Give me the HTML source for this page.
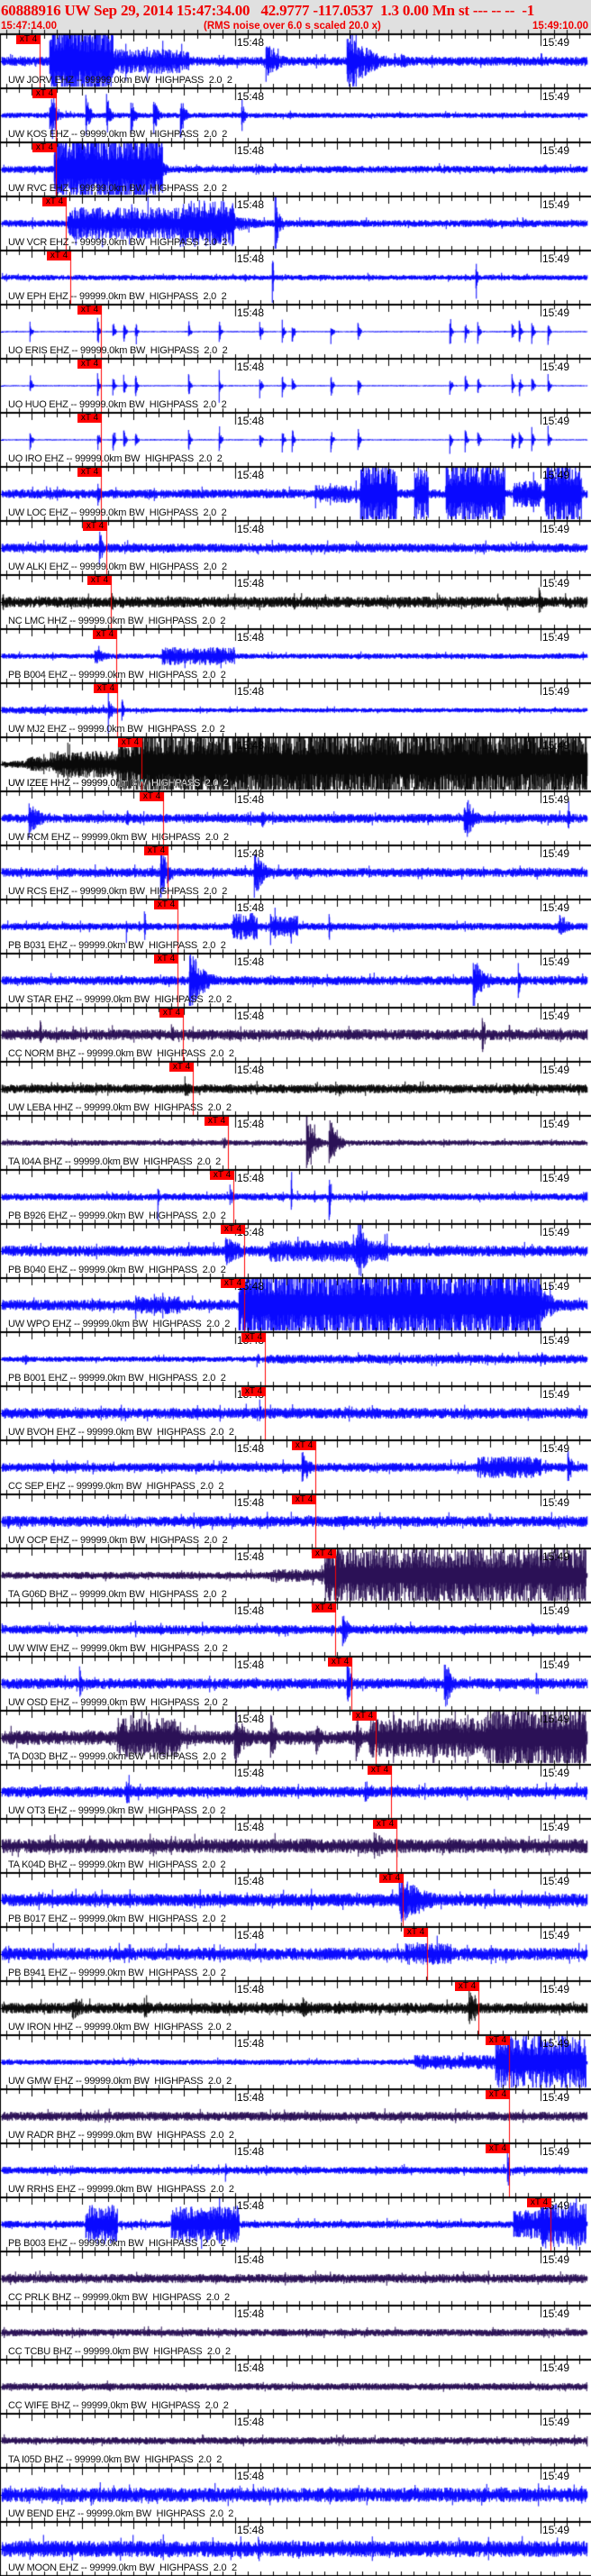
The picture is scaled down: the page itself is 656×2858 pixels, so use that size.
<!DOCTYPE html>
<html><head><meta charset="utf-8">
<style>
html,body{margin:0;padding:0;background:#fff;}
#w{position:relative;width:656px;height:2858px;overflow:hidden;background:#fff;}
#hd{position:absolute;left:0;top:0;width:656px;height:37px;background:#e0e0e0;}
#l1{position:absolute;left:1px;top:2px;font:bold 17px "Liberation Serif",serif;color:#f00000;white-space:pre;letter-spacing:-0.2px;}
.l2{position:absolute;top:23px;font:bold 11.5px "Liberation Sans",sans-serif;color:#f00000;white-space:pre;}
canvas{position:absolute;left:0;top:0;}
.lb{position:absolute;left:9px;font:11px "Liberation Sans",sans-serif;color:#111;white-space:pre;letter-spacing:-0.25px;line-height:12px;}
.t8,.t9{position:absolute;font:12px "Liberation Sans",sans-serif;color:#000;line-height:12px;}
.t8{left:263px}.t9{left:602px}
.bx{position:absolute;width:27px;height:10px;background:#ff0000;color:#000;font:10px "Liberation Sans",sans-serif;line-height:10px;text-align:center;}
</style></head><body><div id="w">
<div id="hd"></div>
<div id="l1">60888916 UW Sep 29, 2014 15:47:34.00   42.9777 -117.0537  1.3 0.00 Mn st --- -- --  -1</div>
<div class="l2" style="left:1px">15:47:14.00</div>
<div class="l2" style="left:226px">(RMS noise over 6.0 s scaled 20.0 x)</div>
<div class="l2" style="left:591px">15:49:10.00</div>
<canvas id="c" width="656" height="2858"></canvas>
<div id="ov">
<div class="lb" style="top:83px">UW JORV EHZ -- 99999.0km BW  HIGHPASS  2.0  2</div>
<div class="lb" style="top:143px">UW KOS EHZ -- 99999.0km BW  HIGHPASS  2.0  2</div>
<div class="lb" style="top:203px">UW RVC EHZ -- 99999.0km BW  HIGHPASS  2.0  2</div>
<div class="lb" style="top:263px">UW VCR EHZ -- 99999.0km BW  HIGHPASS  2.0  2</div>
<div class="lb" style="top:323px">UW EPH EHZ -- 99999.0km BW  HIGHPASS  2.0  2</div>
<div class="lb" style="top:383px">UO ERIS EHZ -- 99999.0km BW  HIGHPASS  2.0  2</div>
<div class="lb" style="top:443px">UO HUO EHZ -- 99999.0km BW  HIGHPASS  2.0  2</div>
<div class="lb" style="top:503px">UO IRO EHZ -- 99999.0km BW  HIGHPASS  2.0  2</div>
<div class="lb" style="top:563px">UW LOC EHZ -- 99999.0km BW  HIGHPASS  2.0  2</div>
<div class="lb" style="top:623px">UW ALKI EHZ -- 99999.0km BW  HIGHPASS  2.0  2</div>
<div class="lb" style="top:683px">NC LMC HHZ -- 99999.0km BW  HIGHPASS  2.0  2</div>
<div class="lb" style="top:743px">PB B004 EHZ -- 99999.0km BW  HIGHPASS  2.0  2</div>
<div class="lb" style="top:803px">UW MJ2 EHZ -- 99999.0km BW  HIGHPASS  2.0  2</div>
<div class="lb" style="top:863px;color:#fff;mix-blend-mode:difference">UW IZEE HHZ -- 99999.0km BW  HIGHPASS  2.0  2</div>
<div class="lb" style="top:923px">UW RCM EHZ -- 99999.0km BW  HIGHPASS  2.0  2</div>
<div class="lb" style="top:983px">UW RCS EHZ -- 99999.0km BW  HIGHPASS  2.0  2</div>
<div class="lb" style="top:1043px">PB B031 EHZ -- 99999.0km BW  HIGHPASS  2.0  2</div>
<div class="lb" style="top:1103px">UW STAR EHZ -- 99999.0km BW  HIGHPASS  2.0  2</div>
<div class="lb" style="top:1163px">CC NORM BHZ -- 99999.0km BW  HIGHPASS  2.0  2</div>
<div class="lb" style="top:1223px">UW LEBA HHZ -- 99999.0km BW  HIGHPASS  2.0  2</div>
<div class="lb" style="top:1283px">TA I04A BHZ -- 99999.0km BW  HIGHPASS  2.0  2</div>
<div class="lb" style="top:1343px">PB B926 EHZ -- 99999.0km BW  HIGHPASS  2.0  2</div>
<div class="lb" style="top:1403px">PB B040 EHZ -- 99999.0km BW  HIGHPASS  2.0  2</div>
<div class="lb" style="top:1463px">UW WPO EHZ -- 99999.0km BW  HIGHPASS  2.0  2</div>
<div class="lb" style="top:1523px">PB B001 EHZ -- 99999.0km BW  HIGHPASS  2.0  2</div>
<div class="lb" style="top:1583px">UW BVOH EHZ -- 99999.0km BW  HIGHPASS  2.0  2</div>
<div class="lb" style="top:1643px">CC SEP EHZ -- 99999.0km BW  HIGHPASS  2.0  2</div>
<div class="lb" style="top:1703px">UW OCP EHZ -- 99999.0km BW  HIGHPASS  2.0  2</div>
<div class="lb" style="top:1763px">TA G06D BHZ -- 99999.0km BW  HIGHPASS  2.0  2</div>
<div class="lb" style="top:1823px">UW WIW EHZ -- 99999.0km BW  HIGHPASS  2.0  2</div>
<div class="lb" style="top:1883px">UW OSD EHZ -- 99999.0km BW  HIGHPASS  2.0  2</div>
<div class="lb" style="top:1943px">TA D03D BHZ -- 99999.0km BW  HIGHPASS  2.0  2</div>
<div class="lb" style="top:2003px">UW OT3 EHZ -- 99999.0km BW  HIGHPASS  2.0  2</div>
<div class="lb" style="top:2063px">TA K04D BHZ -- 99999.0km BW  HIGHPASS  2.0  2</div>
<div class="lb" style="top:2123px">PB B017 EHZ -- 99999.0km BW  HIGHPASS  2.0  2</div>
<div class="lb" style="top:2183px">PB B941 EHZ -- 99999.0km BW  HIGHPASS  2.0  2</div>
<div class="lb" style="top:2243px">UW IRON HHZ -- 99999.0km BW  HIGHPASS  2.0  2</div>
<div class="lb" style="top:2303px">UW GMW EHZ -- 99999.0km BW  HIGHPASS  2.0  2</div>
<div class="lb" style="top:2363px">UW RADR BHZ -- 99999.0km BW  HIGHPASS  2.0  2</div>
<div class="lb" style="top:2423px">UW RRHS EHZ -- 99999.0km BW  HIGHPASS  2.0  2</div>
<div class="lb" style="top:2483px">PB B003 EHZ -- 99999.0km BW  HIGHPASS  2.0  2</div>
<div class="lb" style="top:2543px">CC PRLK BHZ -- 99999.0km BW  HIGHPASS  2.0  2</div>
<div class="lb" style="top:2603px">CC TCBU BHZ -- 99999.0km BW  HIGHPASS  2.0  2</div>
<div class="lb" style="top:2663px">CC WIFE BHZ -- 99999.0km BW  HIGHPASS  2.0  2</div>
<div class="lb" style="top:2723px">TA I05D BHZ -- 99999.0km BW  HIGHPASS  2.0  2</div>
<div class="lb" style="top:2783px">UW BEND EHZ -- 99999.0km BW  HIGHPASS  2.0  2</div>
<div class="lb" style="top:2843px">UW MOON EHZ -- 99999.0km BW  HIGHPASS  2.0  2</div>

<div class="t8" style="top:41px">15:48</div><div class="t9" style="top:41px">15:49</div>
<div class="t8" style="top:101px">15:48</div><div class="t9" style="top:101px">15:49</div>
<div class="t8" style="top:161px">15:48</div><div class="t9" style="top:161px">15:49</div>
<div class="t8" style="top:221px">15:48</div><div class="t9" style="top:221px">15:49</div>
<div class="t8" style="top:281px">15:48</div><div class="t9" style="top:281px">15:49</div>
<div class="t8" style="top:341px">15:48</div><div class="t9" style="top:341px">15:49</div>
<div class="t8" style="top:401px">15:48</div><div class="t9" style="top:401px">15:49</div>
<div class="t8" style="top:461px">15:48</div><div class="t9" style="top:461px">15:49</div>
<div class="t8" style="top:521px">15:48</div><div class="t9" style="top:521px">15:49</div>
<div class="t8" style="top:581px">15:48</div><div class="t9" style="top:581px">15:49</div>
<div class="t8" style="top:641px">15:48</div><div class="t9" style="top:641px">15:49</div>
<div class="t8" style="top:701px">15:48</div><div class="t9" style="top:701px">15:49</div>
<div class="t8" style="top:761px">15:48</div><div class="t9" style="top:761px">15:49</div>
<div class="t8" style="top:821px">15:48</div><div class="t9" style="top:821px">15:49</div>
<div class="t8" style="top:881px">15:48</div><div class="t9" style="top:881px">15:49</div>
<div class="t8" style="top:941px">15:48</div><div class="t9" style="top:941px">15:49</div>
<div class="t8" style="top:1001px">15:48</div><div class="t9" style="top:1001px">15:49</div>
<div class="t8" style="top:1061px">15:48</div><div class="t9" style="top:1061px">15:49</div>
<div class="t8" style="top:1121px">15:48</div><div class="t9" style="top:1121px">15:49</div>
<div class="t8" style="top:1181px">15:48</div><div class="t9" style="top:1181px">15:49</div>
<div class="t8" style="top:1241px">15:48</div><div class="t9" style="top:1241px">15:49</div>
<div class="t8" style="top:1301px">15:48</div><div class="t9" style="top:1301px">15:49</div>
<div class="t8" style="top:1361px">15:48</div><div class="t9" style="top:1361px">15:49</div>
<div class="t8" style="top:1421px">15:48</div><div class="t9" style="top:1421px">15:49</div>
<div class="t8" style="top:1481px">15:48</div><div class="t9" style="top:1481px">15:49</div>
<div class="t8" style="top:1541px">15:48</div><div class="t9" style="top:1541px">15:49</div>
<div class="t8" style="top:1601px">15:48</div><div class="t9" style="top:1601px">15:49</div>
<div class="t8" style="top:1661px">15:48</div><div class="t9" style="top:1661px">15:49</div>
<div class="t8" style="top:1721px">15:48</div><div class="t9" style="top:1721px">15:49</div>
<div class="t8" style="top:1781px">15:48</div><div class="t9" style="top:1781px">15:49</div>
<div class="t8" style="top:1841px">15:48</div><div class="t9" style="top:1841px">15:49</div>
<div class="t8" style="top:1901px">15:48</div><div class="t9" style="top:1901px">15:49</div>
<div class="t8" style="top:1961px">15:48</div><div class="t9" style="top:1961px">15:49</div>
<div class="t8" style="top:2021px">15:48</div><div class="t9" style="top:2021px">15:49</div>
<div class="t8" style="top:2081px">15:48</div><div class="t9" style="top:2081px">15:49</div>
<div class="t8" style="top:2141px">15:48</div><div class="t9" style="top:2141px">15:49</div>
<div class="t8" style="top:2201px">15:48</div><div class="t9" style="top:2201px">15:49</div>
<div class="t8" style="top:2261px">15:48</div><div class="t9" style="top:2261px">15:49</div>
<div class="t8" style="top:2321px">15:48</div><div class="t9" style="top:2321px">15:49</div>
<div class="t8" style="top:2381px">15:48</div><div class="t9" style="top:2381px">15:49</div>
<div class="t8" style="top:2441px">15:48</div><div class="t9" style="top:2441px">15:49</div>
<div class="t8" style="top:2501px">15:48</div><div class="t9" style="top:2501px">15:49</div>
<div class="t8" style="top:2561px">15:48</div><div class="t9" style="top:2561px">15:49</div>
<div class="t8" style="top:2621px">15:48</div><div class="t9" style="top:2621px">15:49</div>
<div class="t8" style="top:2681px">15:48</div><div class="t9" style="top:2681px">15:49</div>
<div class="t8" style="top:2741px">15:48</div><div class="t9" style="top:2741px">15:49</div>
<div class="t8" style="top:2801px">15:48</div><div class="t9" style="top:2801px">15:49</div>

<div class="bx" style="left:18px;top:39px">xT 4</div>
<div class="bx" style="left:36px;top:99px">xT 4</div>
<div class="bx" style="left:36px;top:159px">xT 4</div>
<div class="bx" style="left:47px;top:219px">xT 4</div>
<div class="bx" style="left:52px;top:279px">xT 4</div>
<div class="bx" style="left:86px;top:339px">xT 4</div>
<div class="bx" style="left:86px;top:399px">xT 4</div>
<div class="bx" style="left:86px;top:459px">xT 4</div>
<div class="bx" style="left:86px;top:519px">xT 4</div>
<div class="bx" style="left:92px;top:579px">xT 4</div>
<div class="bx" style="left:97px;top:639px">xT 4</div>
<div class="bx" style="left:103px;top:699px">xT 4</div>
<div class="bx" style="left:104px;top:759px">xT 4</div>
<div class="bx" style="left:131px;top:819px">xT 4</div>
<div class="bx" style="left:155px;top:879px">xT 4</div>
<div class="bx" style="left:160px;top:939px">xT 4</div>
<div class="bx" style="left:171px;top:999px">xT 4</div>
<div class="bx" style="left:171px;top:1059px">xT 4</div>
<div class="bx" style="left:177px;top:1119px">xT 4</div>
<div class="bx" style="left:188px;top:1179px">xT 4</div>
<div class="bx" style="left:227px;top:1239px">xT 4</div>
<div class="bx" style="left:233px;top:1299px">xT 4</div>
<div class="bx" style="left:245px;top:1359px">xT 4</div>
<div class="bx" style="left:245px;top:1419px">xT 4</div>
<div class="bx" style="left:268px;top:1479px">xT 4</div>
<div class="bx" style="left:268px;top:1539px">xT 4</div>
<div class="bx" style="left:324px;top:1599px">xT 4</div>
<div class="bx" style="left:324px;top:1659px">xT 4</div>
<div class="bx" style="left:346px;top:1719px">xT 4</div>
<div class="bx" style="left:346px;top:1779px">xT 4</div>
<div class="bx" style="left:364px;top:1839px">xT 4</div>
<div class="bx" style="left:391px;top:1899px">xT 4</div>
<div class="bx" style="left:408px;top:1959px">xT 4</div>
<div class="bx" style="left:414px;top:2019px">xT 4</div>
<div class="bx" style="left:421px;top:2079px">xT 4</div>
<div class="bx" style="left:448px;top:2139px">xT 4</div>
<div class="bx" style="left:505px;top:2199px">xT 4</div>
<div class="bx" style="left:539px;top:2259px">xT 4</div>
<div class="bx" style="left:539px;top:2319px">xT 4</div>
<div class="bx" style="left:539px;top:2379px">xT 4</div>
<div class="bx" style="left:585px;top:2439px">xT 4</div>
</div>
</div>
<script>
(function(){
var c=document.getElementById('c').getContext('2d');
var s=12345;function R(){s|=0;s=s+0x6D2B79F5|0;var t=Math.imul(s^s>>>15,1|s);t=t+Math.imul(t^t>>>7,61|t)^t;return((t^t>>>14)>>>0)/4294967296;}
var B='#0000ff',K='#000000',P='#240a50';
var burst=[33,108,125,137,150,209,243,288,313,324,367,397,499,516,530,568,576,590,608];
function bl(a){return burst.map(function(x){return [x,x+4,a,0];});}
var T=[
[B,5,[[55,125,40,1],[125,200,14,1],[190,210,12,1],[295,330,24,0],[385,445,38,0],[445,480,10,0]]],
[B,3,[[55,63,24,0],[58,70,30,0],[95,105,28,0],[118,128,26,0],[145,155,24,0],[170,180,26,0],[200,210,30,0],[268,275,24,0]]],
[B,4,[[60,180,40,1],[180,195,12,0]]],
[B,4,[[75,260,18,1],[200,260,26,1],[305,315,36,0],[260,350,10,0],[580,585,8,0]]],
[B,3,[[302,304,36,0],[528,530,36,0]]],
[B,0.6,bl(15)],[B,0.6,bl(15)],[B,0.6,bl(16)],
[B,5,[[108,114,18,0],[350,400,10,1],[400,440,36,1],[460,475,30,1],[495,560,36,1],[570,600,15,1],[605,645,36,1]]],
[B,5,[[110,118,26,0]]],
[K,6,[[124,130,14,0],[598,608,18,0],[632,640,10,0]]],
[B,3,[[105,140,10,0],[180,260,10,1]]],
[B,2.5,[[0,130,4,1],[120,130,18,0],[135,140,16,0],[615,625,5,0]]],
[K,4,[[30,60,8,1],[60,130,15,1],[130,150,28,1],[150,654,42,1]]],
[B,5,[[32,60,22,0],[140,150,14,0],[290,300,14,0],[515,540,32,0],[630,640,14,0]]],
[B,5,[[178,195,38,0],[282,305,32,0]]],
[B,4,[[258,285,15,1],[300,330,12,1],[620,650,15,0],[160,162,25,0],[365,367,25,0],[140,142,20,0],[300,302,22,0]]],
[B,5,[[210,250,38,0],[525,545,38,0],[575,580,25,0]]],
[P,6,[[44,48,25,0],[190,200,15,0],[535,540,25,0],[565,568,15,0]]],
[K,5,[[205,230,12,0],[375,400,10,0],[570,590,10,0]]],
[P,3,[[340,360,36,0],[365,385,34,0],[248,260,8,0]]],
[B,4,[[175,177,30,0],[323,325,25,0],[365,368,40,0],[255,262,14,0]]],
[B,6,[[250,300,18,0],[300,430,12,1],[395,430,36,0]]],
[B,6,[[150,200,10,1],[265,600,40,1],[600,650,22,0]]],
[B,3,[[28,35,8,0],[285,295,9,0],[295,650,5,1],[600,625,10,0]]],
[B,6,[[288,292,16,0]]],
[B,5,[[335,360,18,0],[530,600,12,1],[630,645,20,0]]],
[B,6,[]],
[P,4,[[360,650,32,1],[300,360,7,1]]],
[B,5,[[150,160,10,0],[380,395,22,0],[590,600,10,0]]],
[B,6,[[88,96,22,0],[385,395,32,0],[493,510,36,0],[595,605,14,0]]],
[P,8,[[130,200,22,1],[180,205,28,0],[260,300,28,0],[300,315,32,0],[350,365,25,0],[395,410,28,0],[410,650,22,1],[540,650,36,1]]],
[B,6,[[140,160,16,0],[405,440,14,0]]],
[P,8,[[415,450,18,0]]],
[B,7,[[443,520,28,0]]],
[B,7,[[450,500,12,1]]],
[K,6,[[80,110,16,0],[160,180,12,0],[335,355,14,0],[520,540,28,0]]],
[B,3,[[460,550,8,1],[550,650,30,1]]],
[P,5,[]],
[B,4,[[563,567,32,0],[250,252,16,0]]],
[B,4,[[95,130,22,1],[190,265,20,1],[570,600,16,1],[600,650,25,1],[605,610,36,0]]],
[P,5,[]],[P,4,[]],[P,4,[]],[P,4,[]],
[B,8,[]],[B,9,[]]
];
var picks=[45,63,63,74,79,113,113,113,113,119,124,130,131,158,182,187,198,198,204,215,254,260,272,272,295,295,351,351,373,373,391,418,435,441,448,475,532,566,566,566,612];
for(var i=0;i<T.length;i++){
 var top=37+60*i,cy=top+31,col=T[i][0],n=T[i][1],ev=T[i][2];
 c.strokeStyle=col;c.lineWidth=1;c.beginPath();
 for(var xx=2;xx<652;xx+=0.5){
  var a=n;
  for(var k=0;k<ev.length;k++){var e=ev[k];if(xx>=e[0]&&xx<=e[1]){var v=e[3]?e[2]:e[2]*Math.exp(-2.5*(xx-e[0])/(e[1]-e[0]+1));if(v>a)a=v;}}
  var r1=R(),r2=R();
  var u=a*(0.25+0.75*Math.pow(r1,1.3)),d=a*(0.25+0.75*Math.pow(r2,1.3));
  if(R()<0.03){u*=1.8;d*=1.6;}
  var y1=Math.max(top+2,cy-u),y2=Math.min(top+59,cy+d);
  c.moveTo(xx+0.25,y1);c.lineTo(xx+0.25,y2);
 }
 c.stroke();
 c.fillStyle=col;c.fillRect(0,cy,4,1);
}
// separators and ticks
c.fillStyle='#000';
for(var i=0;i<48;i++){
 var y=37+60*i;c.fillRect(0,y,656,2);
 for(var k=0;k<48;k++){
  var x=Math.round(6.5+14.14*k);if(x>655)break;
  var big=(k%4==2);
  var maj=(Math.abs(x-261)<3||Math.abs(x-600)<3);
  c.fillRect(x,y-4,1,4);
  c.fillRect(x,y+2,1,maj?12:(big?7:4));
 }
}
c.fillRect(0,37,1,2821);
// red pick lines
c.fillStyle='#ff0000';
for(var i=0;i<picks.length;i++){var top=37+60*i;c.fillRect(picks[i]-1,top+2,1,58);}
})();
</script>
</body></html>
